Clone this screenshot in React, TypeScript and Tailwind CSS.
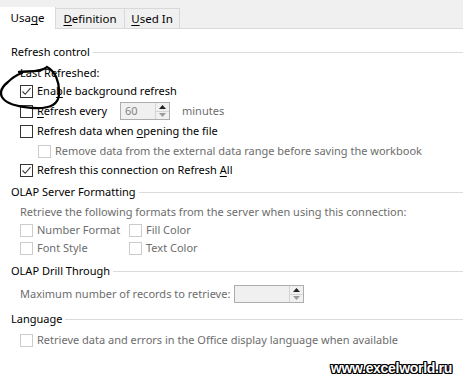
import React from "react";

const FONT = { fontFamily: '"Noto Sans", "Open Sans", sans-serif' };

function Check({ checked = false, disabled = false }: { checked?: boolean; disabled?: boolean }) {
  return (
    <span
      className={`flex h-[13px] w-[13px] shrink-0 items-center justify-center border bg-white ${
        disabled ? "border-[#cccccc]" : "border-[#333333]"
      }`}
    >
      {checked && (
        <svg width="11" height="11" viewBox="0 0 11 11">
          <path d="M1.5 5.5 L4.2 8.3 L9.5 2.2" fill="none" stroke="#333" strokeWidth="1.1" />
        </svg>
      )}
    </span>
  );
}

function Row({
  label,
  checked,
  disabled,
  indent = "pl-5",
  h = "h-5",
}: {
  label: React.ReactNode;
  checked?: boolean;
  disabled?: boolean;
  indent?: string;
  h?: string;
}) {
  return (
    <div className={`flex items-center gap-1 whitespace-nowrap ${indent} ${h}`}>
      <Check checked={checked} disabled={disabled} />
      <span className={disabled ? "text-[#6d6d6d]" : "text-black"}>{label}</span>
    </div>
  );
}

function Heading({ text, mt }: { text: string; mt: string }) {
  return (
    <div className={`flex h-4 items-center gap-[3px] pl-[11px] ${mt}`}>
      <span className="whitespace-nowrap text-black">{text}</span>
      <span className="h-px flex-1 bg-[#dcdcdc]" />
    </div>
  );
}

function Spinner({ value, w }: { value?: string; w: string }) {
  return (
    <div className={`flex h-[18px] ${w} border border-[#adadad] bg-[#f0f0f0]`}>
      <span className="flex-1 pl-1 leading-[16px] text-[#838383]">{value}</span>
      <div className="flex w-[14px] flex-col border-l border-[#d4d4d4]">
        <span className="flex flex-1 items-center justify-center border-b border-[#d4d4d4]">
          <svg width="7" height="4" viewBox="0 0 7 4">
            <path d="M0 4 L3.5 0 L7 4 Z" fill="#222" />
          </svg>
        </span>
        <span className="flex flex-1 items-center justify-center">
          <svg width="7" height="4" viewBox="0 0 7 4">
            <path d="M0 0 L3.5 4 L7 0 Z" fill="#9a9a9a" />
          </svg>
        </span>
      </div>
    </div>
  );
}

const u = (s: string) => <span className="underline underline-offset-2">{s}</span>;

export default function App() {
  return (
    <div className="relative h-[380px] w-[463px] overflow-hidden bg-white text-[11px]" style={FONT}>
      {/* tab strip */}
      <div className="flex h-[29px] items-end border-b border-[#d9d9d9] bg-[#f0f0f0] text-[11.5px]">
        <div className="-mb-px flex h-[22px] w-[56px] items-center justify-center border-r border-[#d9d9d9] bg-white">
          Usa{u("g")}e
        </div>
        <div className="flex h-[20px] w-[69px] items-center justify-center border-r border-t border-[#d9d9d9] bg-[#f0f0f0]">
          {u("D")}efinition
        </div>
        <div className="flex h-[20px] w-[55px] items-center justify-center border-r border-t border-[#d9d9d9] bg-[#f0f0f0]">
          {u("U")}sed In
        </div>
      </div>

      <Heading text="Refresh control" mt="mt-[15px]" />
      <div className="mt-[5px] flex h-4 items-center pl-5">Last Refreshed:</div>
      <Row label={<>Ena{u("b")}le background refresh</>} checked />
      <div className="flex h-5 items-center whitespace-nowrap pl-5">
        <Check />
        <span className="ml-1 w-[83px]">{u("R")}efresh every</span>
        <Spinner value="60" w="w-[50px]" />
        <span className="ml-[12px] text-[#6d6d6d]">minutes</span>
      </div>
      <Row label={<>Refresh data when {u("o")}pening the file</>} />
      <Row label="Remove data from the external data range before saving the workbook" disabled indent="pl-[38px]" />
      <Row label={<>Refresh this connection on Refresh {u("A")}ll</>} checked h="h-[19px]" />

      <Heading text="OLAP Server Formatting" mt="mt-1" />
      <div className="mt-[3px] flex h-[18px] items-center whitespace-nowrap pl-5 text-[#6d6d6d]">
        Retrieve the following formats from the server when using this connection:
      </div>
      <div className="grid grid-cols-[129px_1fr]">
        <Row label="Number Format" disabled h="h-[18px]" />
        <Row label="Fill Color" disabled h="h-[18px]" indent="pl-0" />
        <Row label="Font Style" disabled h="h-[18px]" />
        <Row label="Text Color" disabled h="h-[18px]" indent="pl-0" />
      </div>

      <Heading text="OLAP Drill Through" mt="mt-[6px]" />
      <div className="mt-1 flex h-[22px] items-center whitespace-nowrap pl-5 text-[#6d6d6d]">
        <span className="w-[214px]">Maximum number of records to retrieve:</span>
        <Spinner w="w-[70px]" />
      </div>

      <Heading text="Language" mt="mt-[6px]" />
      <Row label="Retrieve data and errors in the Office display language when available" disabled h="h-5 mt-[3px]" />

      {/* watermark */}
      <div
        className="absolute right-[11px] top-[358px] text-[14px] font-bold tracking-[-0.3px] text-white [text-shadow:1px_1px_0_#000,-1px_-1px_0_#000,1px_-1px_0_#000,-1px_1px_0_#000,0_1px_0_#000,0_-1px_0_#000,1px_0_0_#000,-1px_0_0_#000]"
        style={{ fontFamily: '"Liberation Sans", Arial, sans-serif' }}
      >
        www.excelworld.ru
      </div>

      {/* pen scribble */}
      <svg className="pointer-events-none absolute left-0 top-0" width="80" height="120" viewBox="0 0 80 120">
        <path
          d="M19 72 C30 71 42 72 47 67 C55 71 60 82 59 95 C58 105 48 109 33 108 C19 107 6 104 2 97 C-1 91 3 86 8 82 C12 78 16 75 22 73"
          fill="none"
          stroke="#000"
          strokeWidth="2.3"
          strokeLinecap="round"
        />
      </svg>
    </div>
  );
}
